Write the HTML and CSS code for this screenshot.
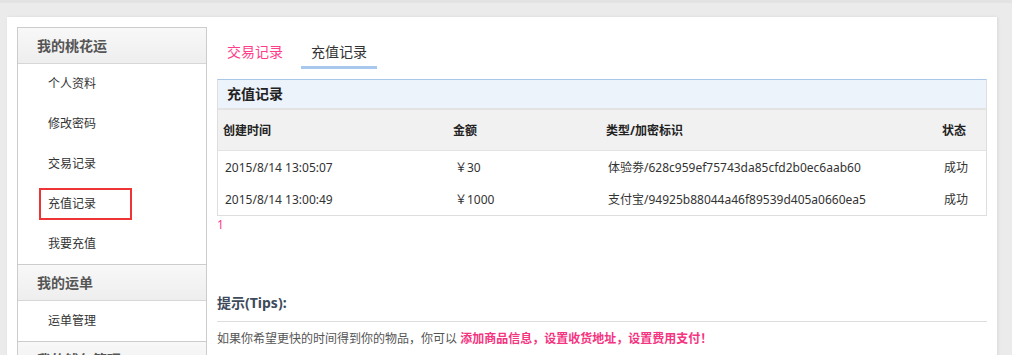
FILE: index.html
```html
<!DOCTYPE html>
<html lang="zh-CN">
<head>
  <meta charset="UTF-8" />
  <title>充值记录 - 我的桃花运</title>
  <link rel="stylesheet" href="styles.css">
</head>
<body>
  <div class="page">
    <!-- left menu -->
    <div class="sidebar">
      <div class="side-title">我的桃花运</div>
      <ul class="side-list">
        <li><a href="#">个人资料</a></li>
        <li><a href="#">修改密码</a></li>
        <li><a href="#">交易记录</a></li>
        <li class="active"><a href="#">充值记录</a></li>
        <li><a href="#">我要充值</a></li>
      </ul>
      <div class="side-title">我的运单</div>
      <ul class="side-list">
        <li><a href="#">运单管理</a></li>
      </ul>
      <div class="side-title">我的钱包管理</div>
      <ul class="side-list">
        <li><a href="#">余额明细</a></li>
      </ul>
    </div>

    <div class="content">
      <div class="tabs">
        <a href="#" class="tab">交易记录</a>
        <a href="#" class="tab current">充值记录</a>
      </div>

      <div class="record-box">
        <div class="box-title">充值记录</div>
        <table class="records">
          <colgroup>
            <col class="c-time">
            <col class="c-amount">
            <col class="c-type">
            <col>
          </colgroup>
          <tr>
            <th>创建时间</th>
            <th>金额</th>
            <th>类型/加密标识</th>
            <th>状态</th>
          </tr>
          <tr>
            <td>2015/8/14 13:05:07</td>
            <td>￥30</td>
            <td>体验劵/628c959ef75743da85cfd2b0ec6aab60</td>
            <td>成功</td>
          </tr>
          <tr>
            <td>2015/8/14 13:00:49</td>
            <td>￥1000</td>
            <td>支付宝/94925b88044a46f89539d405a0660ea5</td>
            <td>成功</td>
          </tr>
        </table>
      </div>
      <div class="pager"><a href="#">1</a></div>

      <div class="tips">
        <h4>提示(Tips):</h4>
        <p>如果你希望更快的时间得到你的物品，你可以 <b>添加商品信息，设置收货地址，设置费用支付！</b></p>
      </div>
    </div>
  </div>
</body>
</html>
```

FILE: styles.css
```css
body {
  margin: 0;
  border-top: 3px solid #e3e3e3;
  background-color: #ebebeb;
  font-family: "Noto Sans", "Noto Sans CJK SC", sans-serif;
  font-size: 12px;
  color: #333;
}
a {
  text-decoration: none;
  color: inherit;
}
.page {
  display: flex;
  margin: 14px 15px 0 7px;
  padding: 10px 10px 60px 10px;
  background-color: #fff;
  box-shadow: 1px 0 3px rgba(0,0,0,0.08);
}

/* sidebar */
.sidebar {
  width: 190px;
  flex: none;
  box-sizing: border-box;
  border: 1px solid #ccc;
  border-bottom: none;
}
.side-title {
  height: 35px;
  line-height: 35px;
  padding-left: 19px;
  font-size: 14px;
  font-weight: bold;
  color: #555;
  background: linear-gradient(#f8f8f8, #eeeeee);
  border-bottom: 1px solid #d6d6d6;
}
.side-list {
  list-style: none;
  margin: 0;
  padding: 0;
  border-bottom: 1px solid #ccc;
}
.side-list li {
  display: flex;
  align-items: center;
  height: 40px;
}
.side-list a {
  display: block;
  margin-left: 21px;
  padding: 0 9px;
  line-height: 28px;
  border: 2px solid transparent;
  border-left-width: 0;
  color: #333;
}
.side-list .active a {
  width: 93px;
  box-sizing: border-box;
  padding-left: 7px;
  border-color: #ee3434;
  border-left-width: 2px;
}

/* content */
.content {
  flex: 1;
  margin-left: 10px;
}
.tabs {
  display: flex;
  padding-top: 15px;
}
.tab {
  padding: 0 10px 4px 10px;
  margin-right: 8px;
  line-height: 20px;
  font-size: 14px;
  color: #ff3d8b;
  border-bottom: 3px solid transparent;
}
.tab.current {
  color: #333;
  border-bottom-color: #a8c8ee;
}
.record-box {
  margin-top: 10px;
  border: 1px solid #dedede;
  border-top-color: #abc7e8;
}
.box-title {
  height: 28px;
  line-height: 28px;
  padding-left: 9px;
  background-color: #edf3fb;
  font-size: 14px;
  font-weight: bold;
  color: #222;
}
.records {
  width: 100%;
  border-collapse: collapse;
  table-layout: fixed;
}
.c-time { width: 230px; }
.c-amount { width: 153px; }
.c-type { width: 336px; }
.records th {
  height: 40px;
  padding: 0 5px;
  text-align: left;
  font-weight: bold;
  color: #222;
  background-color: #f1f1f1;
  border-top: 2px solid #e3e3e3;
  border-bottom: 1px solid #e3e3e3;
}
.records td {
  height: 32px;
  padding: 0 7px;
  white-space: nowrap;
  color: #333;
}
.pager {
  line-height: 18px;
  color: #ff3d8b;
}
.tips {
  margin-top: 59px;
}
.tips h4 {
  margin: 0;
  padding-bottom: 8px;
  line-height: 20px;
  font-size: 14px;
  color: #3d4b5b;
  border-bottom: 1px solid #dddddd;
}
.tips p {
  margin: 8px 0 0 0;
  line-height: 18px;
  color: #555;
}
.tips b {
  color: #f5347f;
}
```
